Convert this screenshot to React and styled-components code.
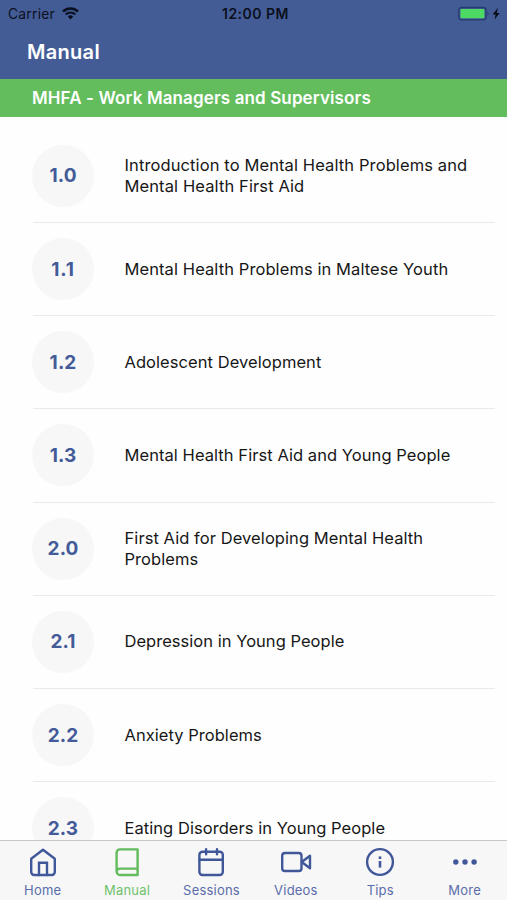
import React from 'react';
import styled, { createGlobalStyle } from 'styled-components';

const GlobalStyle = createGlobalStyle`
  * { box-sizing: border-box; }
  html, body { margin: 0; height: 100%; overflow: hidden; }
  body { font-family: Inter, "Liberation Sans", sans-serif; background: #fff; }
`;

const Screen = styled.div`
  display: flex;
  flex-direction: column;
  width: 507px;
  height: 900px;
  overflow: hidden;
  background: #fefefe;
`;

const Header = styled.header`
  flex: none;
  height: 79px;
  background: #445c96;
`;

const StatusBar = styled.div`
  display: grid;
  grid-template-columns: 1fr auto 1fr;
  align-items: center;
  height: 27px;
  padding: 0 4px 0 8px;
  color: #0b1020;
`;

const Carrier = styled.div`
  display: flex;
  align-items: center;
  gap: 7px;
  font-size: 13.8px;
  letter-spacing: 0.25px;
`;

const Clock = styled.div`
  font-size: 14px;
  font-weight: 600;
  letter-spacing: 0.5px;
`;

const Power = styled.div`
  display: flex;
  align-items: center;
  justify-content: flex-end;
`;

const Title = styled.h1`
  margin: 0;
  padding-left: 27px;
  height: 50px;
  line-height: 50px;
  font-size: 20px;
  font-weight: 600;
  letter-spacing: 0.3px;
  color: #fff;
`;

const Course = styled.h2`
  flex: none;
  margin: 0;
  height: 38px;
  padding-left: 32px;
  line-height: 38px;
  font-size: 17px;
  font-weight: 600;
  letter-spacing: 0.12px;
  color: #fff;
  background: #63bd5d;
`;

const Chapters = styled.ul`
  flex: 1;
  min-height: 0;
  overflow: hidden;
  margin: 0;
  padding: 12.8px 12px 0 33px;
  list-style: none;
`;

const Chapter = styled.li`
  display: flex;
  align-items: center;
  height: 93.2px;
  border-bottom: 1px solid #e9e9e9;
`;

const Badge = styled.span`
  flex: none;
  display: flex;
  align-items: center;
  justify-content: center;
  width: 62px;
  height: 62px;
  margin-left: -1px;
  margin-right: 30.5px;
  border-radius: 50%;
  background: #f7f7f7;
  color: #435b99;
  font-size: 19px;
  font-weight: 650;
  letter-spacing: ${(p) => p.$spacing}px;
`;

const Name = styled.span`
  font-size: 16.5px;
  line-height: 21px;
  letter-spacing: ${(p) => p.$spacing}px;
  color: #171717;
  white-space: pre-line;
`;

const TabBar = styled.nav`
  flex: none;
  display: grid;
  grid-template-columns: repeat(6, 84.4px);
  height: 60px;
  border-top: 1px solid #c9c9cb;
  background: #f7f7f7;
`;

const Tab = styled.div`
  display: flex;
  flex-direction: column;
  align-items: center;
  padding-top: 5px;
  padding-left: 1px;
  color: ${(p) => (p.$active ? '#62bb5d' : '#40589a')};
`;

const TabLabel = styled.span`
  margin-top: 3px;
  font-size: 13px;
  line-height: 18px;
  letter-spacing: 0.2px;
  color: ${(p) => (p.$active ? '#70c26c' : '#596daa')};
`;

const TabIcon = styled.svg`
  display: block;
  width: 32px;
  height: 32px;
  fill: none;
  stroke: currentColor;
  stroke-width: 2.4;
  stroke-linejoin: round;
  stroke-linecap: round;
`;

const Glyph = styled.svg`
  display: block;
  flex: none;
`;

const chapters = [
  ['1.0', 'Introduction to Mental Health Problems and\nMental Health First Aid', 0.11],
  ['1.1', 'Mental Health Problems in Maltese Youth', 0.09],
  ['1.2', 'Adolescent Development', 0.06],
  ['1.3', 'Mental Health First Aid and Young People', 0.06],
  ['2.0', 'First Aid for Developing Mental Health\nProblems', 0.07],
  ['2.1', 'Depression in Young People', 0.03],
  ['2.2', 'Anxiety Problems', 0.04],
  ['2.3', 'Eating Disorders in Young People', 0.05],
];

const tabs = [
  ['Home', <><path d="M4.2 12.7 16 3.7l11.8 9V26a3 3 0 0 1-3 3H7.2a3 3 0 0 1-3-3Z" /><path d="M12 29V16.7h8V29" strokeLinejoin="miter" /></>],
  ['Manual', <><path d="M26.6 22.6V3.4H9a3.4 3.4 0 0 0-3.4 3.4v18.8A3.4 3.4 0 0 0 9 29h17.6v-6.4H9a3.4 3.4 0 0 0-3.4 3" /></>],
  ['Sessions', <><rect x="4.4" y="5.8" width="23.4" height="23.2" rx="3" /><path d="M4.4 13.8h23.4M11.1 3.2v5M22 3.2v5" /></>],
  ['Videos', <><rect x="2.2" y="7" width="19.3" height="18" rx="2.8" /><path d="m21.7 16 8.3-6.3v12.6Z" /></>],
  ['Tips', <><circle cx="16" cy="16" r="12.9" /><path d="M16 15v6.6" strokeLinecap="butt" strokeWidth="2.6" /><path d="M16 10.4v2.6" strokeLinecap="butt" strokeWidth="2.6" /></>],
  ['More', <g fill="currentColor" stroke="none"><circle cx="6.8" cy="16" r="2.7" /><circle cx="16" cy="16" r="2.7" /><circle cx="25.1" cy="16" r="2.7" /></g>],
];

const WifiIcon = () => (
  <Glyph width="17" height="13" viewBox="0 0 17 13" fill="none" stroke="currentColor">
    <path d="M1 4.5a10.7 10.7 0 0 1 15 0" strokeWidth="2.5" />
    <path d="M3.7 7.5a6.8 6.8 0 0 1 9.6 0" strokeWidth="2.1" />
    <path d="M5.8 9.6a3.8 3.8 0 0 1 5.4 0L8.5 12.4Z" fill="currentColor" stroke="none" />
  </Glyph>
);

const BatteryIcon = () => (
  <Glyph width="45" height="16" viewBox="0 0 45 16">
    <rect x=".8" y="1.5" width="27.2" height="12.4" rx="2.8" fill="none" stroke="#243a70" strokeWidth="1.3" />
    <rect x="2.4" y="3.1" width="24" height="9.2" rx="1" fill="#4cd964" />
    <path d="M29.5 5.5q2.2 2.2 0 4.4Z" fill="#243a70" />
    <path d="M40 1.8 34.6 8.6h3l-1 4.8 5-6.4h-2.9Z" fill="#080c18" />
  </Glyph>
);

export default function App() {
  return (
    <>
      <GlobalStyle />
      <Screen>
        <Header>
          <StatusBar>
            <Carrier>Carrier<WifiIcon /></Carrier>
            <Clock>12:00 PM</Clock>
            <Power><BatteryIcon /></Power>
          </StatusBar>
          <Title>Manual</Title>
        </Header>
        <Course>MHFA - Work Managers and Supervisors</Course>
        <Chapters>
          {chapters.map(([number, name, spacing]) => (
            <Chapter key={number}>
              <Badge $spacing={number === '1.1' ? 0.8 : 0.1}>{number}</Badge>
              <Name $spacing={spacing}>{name}</Name>
            </Chapter>
          ))}
        </Chapters>
        <TabBar>
          {tabs.map(([label, art]) => (
            <Tab key={label} $active={label === 'Manual'}>
              <TabIcon viewBox="0 0 32 32">{art}</TabIcon>
              <TabLabel $active={label === 'Manual'}>{label}</TabLabel>
            </Tab>
          ))}
        </TabBar>
      </Screen>
    </>
  );
}
